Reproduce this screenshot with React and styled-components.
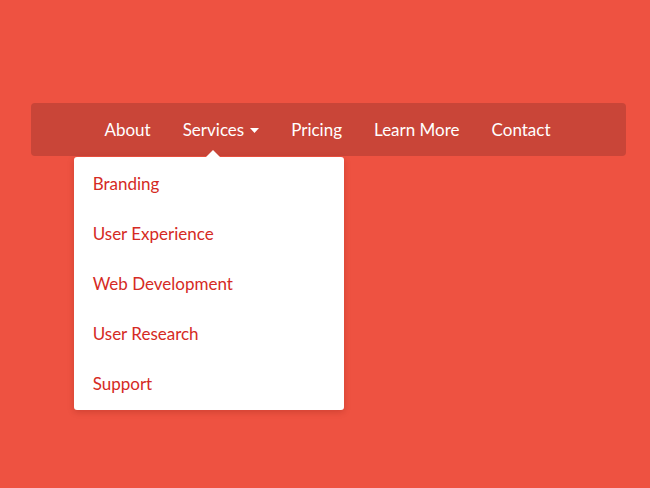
import React from "react";
import styled, { createGlobalStyle } from "styled-components";

const Global = createGlobalStyle`
  html, body { margin: 0; padding: 0; }
  body {
    background: #ee5241;
    font-family: "Lato", "Open Sans", sans-serif;
    -webkit-font-smoothing: antialiased;
  }
`;

const Page = styled.div`
  width: 650px;
  height: 488px;
  box-sizing: border-box;
  padding: 103px 24px 0 31px;
  background: #ee5241;
`;

const Bar = styled.nav`
  height: 53px;
  background: #c94538;
  border-radius: 4px;
  display: flex;
  align-items: center;
  justify-content: center;
  gap: 32px;
  padding-right: 2px;
`;

const Item = styled.div`
  position: relative;
  display: flex;
  align-items: center;
  gap: 6px;
  color: #ffffff;
  font-size: 17px;
  line-height: 53px;
  height: 53px;
`;

const Label = styled.span`
  position: relative;
  display: inline-block;
`;

const Arrow = styled.svg`
  width: 9px;
  height: 5px;
  margin-top: 1px;
`;

const Caret = styled.span`
  position: absolute;
  left: 50%;
  bottom: -1px;
  transform: translateX(-50%);
  width: 0;
  height: 0;
  border-left: 7px solid transparent;
  border-right: 7px solid transparent;
  border-bottom: 7px solid #ffffff;
  z-index: 3;
`;

const Menu = styled.ul`
  position: absolute;
  top: 54px;
  left: -109px;
  width: 270px;
  margin: 0;
  padding: 2px 0 1px;
  list-style: none;
  background: #ffffff;
  border-radius: 3px;
  box-shadow: 0 2px 6px rgba(120, 20, 10, 0.25);
  z-index: 2;
`;

const MenuItem = styled.li`
  height: 50px;
  line-height: 50px;
  padding: 0 19px;
  color: #d52a24;
  font-size: 17px;
`;

const services = ["Branding", "User Experience", "Web Development", "User Research", "Support"];

export default function App() {
  return (
    <>
      <Global />
      <Page>
        <Bar>
          <Item>About</Item>
          <Item>
            <Label>
              Services
              <Caret />
            </Label>
            <Arrow viewBox="0 0 9 5">
              <path d="M0 0 L9 0 L4.5 5 Z" fill="#ffffff" />
            </Arrow>
            <Menu>
              {services.map((s) => (
                <MenuItem key={s}>{s}</MenuItem>
              ))}
            </Menu>
          </Item>
          <Item>Pricing</Item>
          <Item>Learn More</Item>
          <Item>Contact</Item>
        </Bar>
      </Page>
    </>
  );
}
